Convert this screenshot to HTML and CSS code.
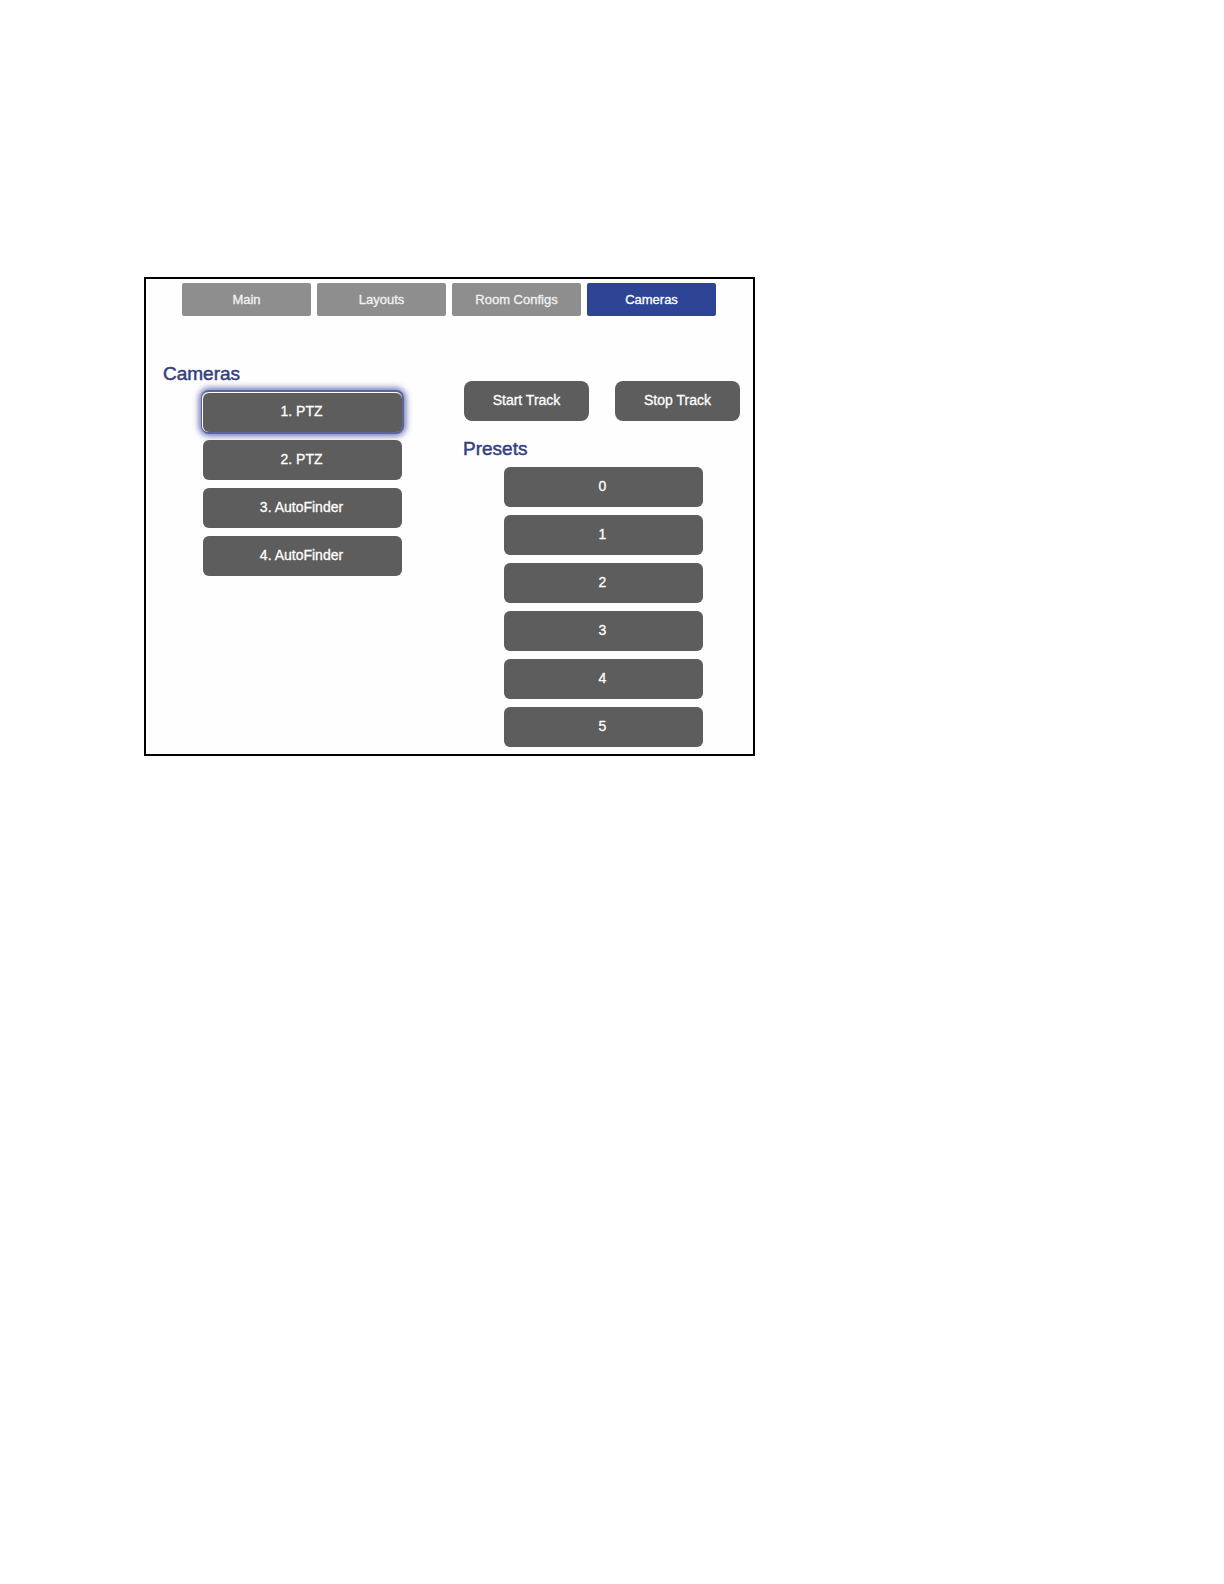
FILE: index.html
```html
<!DOCTYPE html>
<html lang="en">
<head>
<meta charset="utf-8">
<meta name="viewport" content="width=device-width, initial-scale=1">
<title>Cameras</title>
<link rel="stylesheet" href="styles.css">
</head>
<body>
<main class="panel">
  <nav class="tabs">
    <button type="button" class="tab">Main</button>
    <button type="button" class="tab">Layouts</button>
    <button type="button" class="tab">Room Configs</button>
    <button type="button" class="tab tab-active" aria-current="page">Cameras</button>
  </nav>
  <div class="columns">
    <section class="column">
      <h2 class="heading">Cameras</h2>
      <div class="list">
        <button type="button" class="button button-selected" aria-pressed="true">1. PTZ</button>
        <button type="button" class="button">2. PTZ</button>
        <button type="button" class="button">3. AutoFinder</button>
        <button type="button" class="button">4. AutoFinder</button>
      </div>
    </section>
    <section class="column column-presets">
      <div class="tracking">
        <button type="button" class="button button-track">Start Track</button>
        <button type="button" class="button button-track">Stop Track</button>
      </div>
      <h2 class="heading">Presets</h2>
      <div class="list list-presets">
        <button type="button" class="button">0</button>
        <button type="button" class="button">1</button>
        <button type="button" class="button">2</button>
        <button type="button" class="button">3</button>
        <button type="button" class="button">4</button>
        <button type="button" class="button">5</button>
      </div>
    </section>
  </div>
</main>
</body>
</html>
```
FILE: styles.css
```css
* {
  box-sizing: border-box;
}

body {
  margin: 0;
  padding: 277px 144px;
  background: #fff;
  font-family: "Liberation Sans", Arial, sans-serif;
}

.panel {
  max-width: 611px;
  border: 2px solid #000;
  background: #fefefe;
}

.tabs {
  display: grid;
  grid-template-columns: repeat(4, 1fr);
  gap: 6px;
  padding: 4px 37px 0 36px;
}

.tab {
  border: 0;
  border-radius: 2px;
  padding: 7px 0 6px;
  background: #8e8e8e;
  color: #f2f2f2;
  font: 13px/20px "Liberation Sans", Arial, sans-serif;
  -webkit-text-stroke: 0.3px currentColor;
}

.tab-active {
  background: #2d4594;
  color: #fff;
}

.columns {
  display: grid;
  grid-template-columns: 239fr 277fr;
  gap: 61px;
  padding: 46px 13px 7px 17px;
}

.heading {
  margin: 0 0 6px;
  color: #33407f;
  font-size: 19px;
  font-weight: 400;
  line-height: 24px;
  -webkit-text-stroke: 0.5px currentColor;
}

.list {
  display: grid;
  gap: 8px;
  padding-left: 40px;
}

.list-presets {
  padding-right: 37px;
  padding-left: 41px;
}

.button {
  border: 0;
  border-radius: 6px;
  padding: 9px 2px 11px 0;
  background: #5d5d5d;
  color: #fff;
  font: 14px/20px "Liberation Sans", Arial, sans-serif;
  -webkit-text-stroke: 0.3px currentColor;
}

.button-selected {
  box-shadow:
    -1px 0 0 #fff,
    inset 0 1px 0 #fff,
    0 0 0 2px #5b659c,
    0 0 6px 4px #6a73b4;
}

.column-presets {
  padding-top: 19px;
}

.tracking {
  display: grid;
  grid-template-columns: 1fr 1fr;
  gap: 26px;
  padding: 0 0 16px 1px;
}

.button-track {
  border-radius: 8px;
  padding-right: 0;
}
```
